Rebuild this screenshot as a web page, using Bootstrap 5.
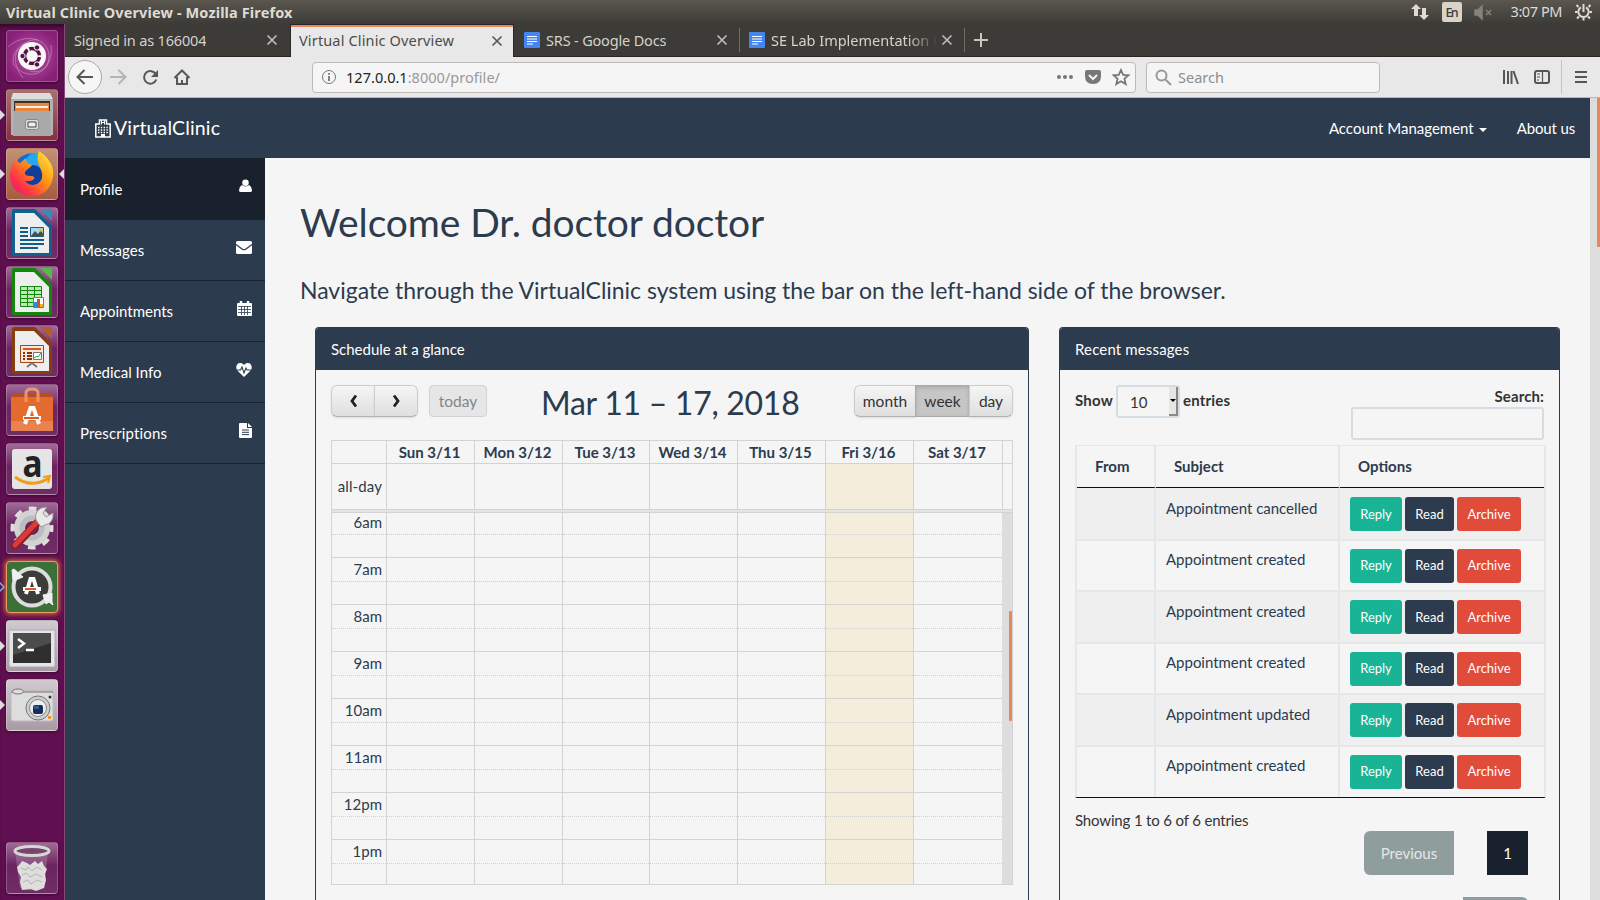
<!DOCTYPE html>
<html lang="en">
<head>
<meta charset="utf-8">
<title>Virtual Clinic Overview</title>
<link rel="stylesheet" href="https://cdn.jsdelivr.net/npm/bootstrap@5.3.0/dist/css/bootstrap.min.css">
<style>
:root{--navy:#2c3b4e;--ink:#19222c;--line:#d3d3d3;--soft:#e4e8e8}
body{width:1600px;height:900px;overflow:hidden;background:#f5f5f5;font:15px/21px Lato,sans-serif;color:var(--navy)}
svg{display:block;flex:none}
.chrome{font-family:"Noto Sans",sans-serif;font-size:14.5px;line-height:20px}
.panelbar{height:24px;background:linear-gradient(#5b574f,#3c3b37);color:#dfdbd2;padding-left:6px}
.panelbar b{letter-spacing:.13px;font-size:14.5px}
.dock{width:65px;height:876px;background:#600f50;border-right:1px solid #87487a;padding:6px 0 0 6px;box-shadow:inset 0 5px 5px -3px #2a0623}
.tile{width:52px;height:52px;margin-bottom:7px;border-radius:4px;border:1px solid #ffffff38;background:linear-gradient(#a06b98,#6c2460 45%,#702d65);position:relative;box-shadow:0 1px 3px #0006}
.tile svg{margin:-1px}
.tile.run::before{content:"";position:absolute;left:-7px;top:20px;border:5px solid transparent;border-left-color:#ddd;border-right:0}
.tile.focus::after{content:"";position:absolute;right:-7px;top:20px;border:5px solid transparent;border-right-color:#ddd;border-left:0}
.tile.pending::after{content:"";position:absolute;left:-7px;top:22px;border:3px solid transparent;border-left-color:#600f50;border-right:0}
.tile.pending::before{border-left-color:#79b7e8}
.tabsbar{height:33px;background:#3c3b37;color:#d5d2ca;border-bottom:1px solid #2b2427}
.btab{height:32px;padding:0 11px 0 9px}
.btab.on{height:33px;background:#e9e8e8;color:#4c4c4c;border:1px solid #2b2427;border-width:1px 1px 0;box-shadow:inset 0 2px #e9855b;padding:0 10px 0 8px}
.btab span{white-space:nowrap;overflow:hidden}
.toolbar{height:41px;background:#e9e8e8;border-bottom:1px solid #b9b6b3}
.field{height:31px;border:1px solid #bfbab5;border-radius:4px;background:#f5f5f5}
.topnav{height:60px;background:var(--navy);color:#fff;padding:0 15px 0 30px}
.side{width:200px;background:var(--navy);color:#fff}
.side a{height:61px;padding:1px 13px 0 15px;border-bottom:1px solid var(--ink);color:#fff;text-decoration:none}
.side svg{margin-top:-6px}
.side a.on{background:var(--ink);height:62px}
h1{font-size:39px;line-height:43px;margin:43px 0 0;font-weight:400;letter-spacing:-.11px}
h4.lede{font-size:23px;line-height:26px;margin:33px 0 0;font-weight:400;white-space:nowrap;letter-spacing:-.025px}
.box{border:1px solid var(--navy);border-radius:4px;height:573px;border-bottom:0;border-radius:4px 4px 0 0;overflow:hidden}
.box>header{height:42px;background:var(--navy);color:#fff;padding:11px 15px}
.fc{height:32px;border:1px solid #ccc;border-color:#ccc #ccc #b2b2b2;background:linear-gradient(#f5f5f5,#dfdfdf);color:#333;box-shadow:0 1px 2px #0000001a;display:flex;align-items:center;justify-content:center;font-size:15.5px}
.calgrid{display:grid;grid-template-columns:55px 88px 88px 87px 88px 88px 88px 89px 10px}
.cal{width:682px;border:1px solid var(--line);border-left:0}
.calgrid>div{border-left:1px solid var(--line)}
.calhead{height:22px;text-align:center;font-weight:700;line-height:23px}
.calhead>div{padding-right:2px}
.today{background:#f3edda}
.hour{height:47px;border-top:1px solid var(--line)}
.hour i{display:block;height:24px;border-bottom:1px dotted #cfcfcf;font-style:normal;text-align:right;padding-right:4px;line-height:23px}
.calview{height:371px;overflow:hidden}
.msgs{width:471px;border-collapse:separate;border-spacing:0;table-layout:fixed;border:2px solid var(--soft);border-width:1px 2px 0;border-bottom:1px solid #111;margin-top:5px}
.msgs td,.msgs th{border-right:2px solid var(--soft);vertical-align:top;padding:0}
.msgs td:last-child,.msgs th:last-child{border-right:0}
.msgs th{height:42px;padding:10px 18px 0;border-bottom:1px solid #111}
.msgs td{height:51.5px;border-bottom:2px solid var(--soft);padding:8px 10px 0}
.msgs tr:first-child td{height:52.5px;padding-top:9px}
.msgs tr:nth-child(odd) td{background:#efefef}
.msgs tr:last-child td{border-bottom:0;height:50.5px}
.subj{margin-top:.7px;letter-spacing:-.02px}
.mini{height:34px;border-radius:3px;color:#fff;font-size:13px;display:flex;align-items:center;justify-content:center;margin-right:3px}
.pg{height:44px;display:flex;align-items:center;justify-content:center;color:#e4e8e8;background:#8f9d9d}
</style>
</head>
<body>
<div class="chrome panelbar d-flex justify-content-between align-items-center"><b>Virtual Clinic Overview - Mozilla Firefox</b>
<svg width="190" height="24" viewBox="1410 0 190 24"><path d="M1416 4l5 5h-3v7h-4V9h-3zM1424 20l-5-5h3V8h4v7h3z" fill="#dfdbd2"/><rect x="1442" y="2" width="20" height="20" rx="2" fill="#d8d4c9"/><text x="1445.500" y="17" font-size="12.500" font-weight="500" fill="#3c3b37" textLength="13">En</text><path d="M1475 10h3l4-4v13l-4-4h-3zM1486 10l5 5m0-5l-5 5" fill="#84827b" stroke="#84827b" stroke-width="1.500"/><text x="1510.500" y="17" font-size="14.500" fill="#dfdbd2" textLength="52">3:07 PM</text><g fill="none" stroke="#dfdbd2" stroke-width="2"><path d="M1581 7.300a5.200 5.200 0 1 0 5 0"/><path d="M1583.500 4v8"/><path d="M1578.500 7l-2-2M1588.500 7l2-2M1577.500 12h-2.500M1589.500 12h2.500M1579 16.500l-2 2M1588 16.500l2 2M1583.500 18v2.500"/></g></svg></div>
<div class="d-flex">
<aside class="dock">
<div class="tile" style="background:radial-gradient(#b35aa3,#8a1f78 80%)"><svg width="52" height="52"><g fill="none" stroke="#d69bcd" stroke-opacity=".55"><path d="M2 17C18 2 43 8 43 26 43 45 20 51 8 35 3 22 20 8 32 10M17 48C5 32 8 19 20 13M24 41c14 4 23-9 21-26"/></g><circle cx="26" cy="26" r="14" fill="#f8f8f8"/><circle cx="26" cy="26" r="7.500" fill="none" stroke="#591047" stroke-width="3.500" stroke-dasharray="13.700 2" stroke-dashoffset="-1"/><g fill="#591047" stroke="#f8f8f8"><circle cx="16.500" cy="26" r="2.700"/><circle cx="31" cy="17.500" r="2.700"/><circle cx="31" cy="34.500" r="2.700"/></g></svg></div>
<div class="tile run" style="background:linear-gradient(#a9716e,#852f43)"><svg width="52" height="52"><path d="M7 4h37l3 8v34H5V12z" fill="#b2b2b2"/><path d="M7 4h37l3 6H5z" fill="#ddd"/><path d="M8 12h36v14H8z" fill="#3b302c"/><path d="M9 14h34v9H9z" fill="#e9853e"/><path d="M10 17h32v2H10z" fill="#fff0d7"/><path d="M8 22h36v1l1 24H7z" fill="#a9a9a9"/><rect x="19.500" y="30.500" width="13" height="10" rx="2" fill="#ddd" stroke="#888"/><path d="M22 33h8v5h-8z" fill="#eee" stroke="#444"/></svg></div>
<div class="tile run focus" style="background:linear-gradient(#c19276,#a85b40)"><svg width="52" height="52"><defs><linearGradient id="ff" x1="1" y1="0" x2="0" y2="1"><stop stop-color="#fff34b"/><stop offset=".4" stop-color="#ff9b12"/><stop offset=".75" stop-color="#ff3347"/><stop offset="1" stop-color="#dd1281"/></linearGradient></defs><circle cx="26" cy="25" r="19.500" fill="#0f6ed3"/><circle cx="30" cy="16" r="11" fill="#25a8ef"/><circle cx="27" cy="27" r="10" fill="#123d9a"/><path d="M33 3c9 6 16 15 14 26-2 12-10 19-21 19C13 48 4 40 4 28c0-8 3-14 7-18 0 3 1 4 3 5l6-5c0 4 1 6 6 7-2 3-5 4-7 7-1 3 2 4 6 4 3 0 4 2 3 3-3 3-7 2-9 2 5 7 15 4 17-3 2-9-8-15-3-27z" fill="url(#ff)"/></svg></div>
<div class="tile"><svg width="52" height="52"><path d="M6 4q0-2 2-2h21l17 17v28q0 2-3 2H8q-2 0-2-2z" fill="#11618f"/><path d="M9 6h19l15 15v25H9z" fill="#eee"/><path d="M34 2h12v12z" fill="#398abb"/><path d="M14 21h8m-8 4h8m-8 4h8m-8 4h24m-24 4h24m-24 4h18" stroke="#135c87" stroke-width="2"/><path d="M24.500 20.500h13v9h-13z" fill="#a9d6f2" stroke="#195982"/><path d="M25 29l4-5 3 3 3-4 3 6z" fill="#47513d"/><circle cx="35" cy="23" r="1.700" fill="#e9c22e"/></svg></div>
<div class="tile"><svg width="52" height="52"><path d="M6 4q0-2 2-2h21l17 17v28q0 2-3 2H8q-2 0-2-2z" fill="#14860d"/><path d="M9 6h19l15 15v25H9z" fill="#eee"/><path d="M34 2h12v12z" fill="#58ba46"/><path d="M14.500 20.500h21v20h-21zM14 24.500h22m-22 4h22m-22 4h22m-22 4h22M21.500 20v21m7-21v21" fill="#b9e9b4" stroke="#14860d"/><path d="M27.500 31.500h10v10h-10z" fill="#fff" stroke="#777"/><path d="M28 36h3v5h-3z" fill="#268ee0"/><path d="M31 33h3v8h-3z" fill="#cf5418"/><path d="M34 38h3v3h-3z" fill="#eeb51b"/></svg></div>
<div class="tile"><svg width="52" height="52"><path d="M6 4q0-2 2-2h21l17 17v28q0 2-3 2H8q-2 0-2-2z" fill="#873d10"/><path d="M9 6h19l15 15v25H9z" fill="#eee"/><path d="M34 2h12v12z" fill="#b45e2d"/><path d="M14.500 20.500h23v17h-23z" fill="#f7e7dc" stroke="#a34711"/><path d="M17 24h18" stroke="#d35a1b" stroke-width="2"/><path d="M17 28h2m2 0h5m-9 3h2m2 0h5m-9 3h2m2 0h5" stroke="#8b3308" stroke-width="2"/><path d="M27.500 27.500h8v7h-8z" fill="#fff" stroke="#777"/><path d="M28 33l3-2 1 1 3-4" stroke="#2aa437" fill="none"/><path d="M26 38l-5 4m5-4l5 4" stroke="#777" stroke-width="2"/></svg></div>
<div class="tile"><svg width="52" height="52"><path d="M5 13l3-3h36l3 3v34H5z" fill="#e36b2e"/><path d="M5 13l3-3h36l3 3z" fill="#b94d20"/><path d="M5 37h42v10H5z" fill="#e98150"/><path d="M20 18V9q0-4 6-4t6 4v9" fill="none" stroke="#ed9569" stroke-width="3"/><path d="M19 40l5.500-16h3L33 40M17 34h18" fill="none" stroke="#fff" stroke-width="4"/><path d="M18 34h15" stroke="#e8581c" stroke-width="2"/></svg></div>
<div class="tile"><svg width="52" height="52"><rect x="6" y="6" width="40" height="40" rx="3" fill="#e5e5e5"/><text x="16.500" y="34" font-family="Noto Sans" font-weight="700" font-size="38" fill="#222" textLength="20" lengthAdjust="spacingAndGlyphs">a</text><path d="M9 34q16 12 34 1" fill="none" stroke="#f49b17" stroke-width="3"/><path d="M42 40l2-7-7 1" fill="none" stroke="#f49b17" stroke-width="2"/></svg></div>
<div class="tile"><svg width="52" height="52"><circle cx="26" cy="26" r="18.500" fill="none" stroke="#dedede" stroke-width="6" stroke-dasharray="7.300 7.230" stroke-dashoffset="3.600"/><circle cx="26" cy="26" r="12.500" fill="none" stroke="#d3d3d3" stroke-width="11"/><circle cx="26" cy="26" r="10" fill="none" stroke="#bdbdbd" stroke-width="5"/><path d="M9 44l24-25" stroke="#842227" stroke-width="8" stroke-linecap="round"/><path d="M9 43l23-24" stroke="#dd393b" stroke-width="5" stroke-linecap="round"/><path d="M30 18q-2-8 5-12l6-1-4 6 3 4 7-4q1 10-8 12l-4 2z" fill="#e9e9e9" stroke="#999"/></svg></div>
<div class="tile run pending" style="background:#3b7038;border-color:#ef9a5d;box-shadow:0 0 5px 1px #e4793e"><svg width="52" height="52"><circle cx="26" cy="26" r="18.500" fill="#3c3c3b" stroke="#ddd" stroke-width="4"/><path d="M6 9l2-1 9 8-10 4zM37 34l9-2v9l1 3-4-3-3 2z" fill="#eee" stroke="#eee"/><path d="M20 33l4.500-15h3L32 33M17 28h18" fill="none" stroke="#fff" stroke-width="4"/><path d="M19 28h11" stroke="#e85818" stroke-width="2"/></svg></div>
<div class="tile run" style="background:linear-gradient(#d1c9d0,#a99ba6)"><svg width="52" height="52"><rect x="3" y="10" width="46" height="37" rx="1" fill="#e5e5e5" stroke="#aaa"/><path d="M7 13h38v30H7z" fill="#2f2f2f"/><path d="M7 13h38v10L7 35z" fill="#4c4c4c"/><path d="M12 19l6 4.500-6 4.500M20 30h8" fill="none" stroke="#fff" stroke-width="2.500"/></svg></div>
<div class="tile run" style="background:linear-gradient(#d1c9d0,#a99ba6)"><svg width="52" height="52"><rect x="5" y="12" width="42" height="30" rx="2" fill="#ddd" stroke="#bbb"/><path d="M5 13h42" stroke="#777"/><ellipse cx="12" cy="12.500" rx="5.500" ry="2.500" fill="#ddd" stroke="#777"/><circle cx="32" cy="29" r="12" fill="#cecece" stroke="#777"/><circle cx="32" cy="29" r="8.500" fill="#eee" stroke="#888"/><rect x="27" y="26" width="10" height="9" rx="2" fill="#182c56"/><path d="M28 27h5v3h-5z" fill="#2c5e9d"/><path d="M42 37h3v3h-3z" fill="#e59a22"/><circle cx="44" cy="18" r="1.500" fill="#333"/></svg></div>
<div class="tile" style="margin-top:111px"><svg width="52" height="52"><path d="M9 10l5 36q12 5 24 0l4-36z" fill="#b99bb7" fill-opacity=".35"/><path d="M11 25l3-3 2-3 5 2 3 2 5-4 3 3 4-3 2 5 3 3-2 5 1 6-2 8-8 3-5-2-9 1-2-8 1-5-3-5z" fill="#dededc"/><path d="M15 26l5 2 2-3 4 4 5-4 5 3M16 33l4-2 4 4 6-3 6 3M17 40l5-2 3 4 6-4 5 2" fill="none" stroke="#b4b4b2"/><ellipse cx="26" cy="9" rx="17" ry="4.500" fill="#77466f" stroke="#d5d8d3" stroke-width="3"/></svg></div>
</aside>
<div class="flex-grow-1">
<div class="chrome tabsbar d-flex">
<div class="btab d-flex align-items-center justify-content-between" style="width:225px;padding-right:12px"><span style="letter-spacing:-.17px">Signed in as 166004</span><svg width="12" height="12" viewBox="0 0 12 12"><path d="M1.500 1.500l9 9m0-9l-9 9" stroke="#c2bfb9" stroke-width="1.600"/></svg></div>
<div class="btab on d-flex align-items-center justify-content-between" style="width:224px"><span style="letter-spacing:.15px;margin-top:-2px">Virtual Clinic Overview</span><svg width="12" height="12" viewBox="0 0 12 12"><path d="M1.500 1.500l9 9m0-9l-9 9" stroke="#555" stroke-width="1.600"/></svg></div>
<div class="btab d-flex align-items-center" style="width:225px;padding-left:10px"><svg width="16" height="16" viewBox="0 0 16 16" class="me-1"><rect width="16" height="16" rx="1" fill="#4485f0"/><path d="M3 4.500h10M3 7h10M3 9.500h10M3 12h6" stroke="#fff" stroke-width="1.200"/></svg><span style="margin-left:2px;letter-spacing:-.17px">SRS - Google Docs</span><svg class="ms-auto" width="12" height="12" viewBox="0 0 12 12"><path d="M1.500 1.500l9 9m0-9l-9 9" stroke="#c2bfb9" stroke-width="1.600"/></svg></div>
<div class="btab d-flex align-items-center my-1" style="width:226px;height:24px;border:1px solid #706d67;border-width:0 1px;padding-left:9px"><svg width="16" height="16" viewBox="0 0 16 16" class="me-1"><rect width="16" height="16" rx="1" fill="#4485f0"/><path d="M3 4.500h10M3 7h10M3 9.500h10M3 12h6" stroke="#fff" stroke-width="1.200"/></svg><span style="margin-left:2px;width:166px;-webkit-mask:linear-gradient(90deg,#000 82%,#0003 97%,transparent)">SE Lab Implementation P</span><svg class="ms-auto" width="12" height="12" viewBox="0 0 12 12"><path d="M1.500 1.500l9 9m0-9l-9 9" stroke="#c2bfb9" stroke-width="1.600"/></svg></div>
<svg width="34" height="32"><path d="M16 9v14M9 16h14" stroke="#c9c6bf" stroke-width="2"/></svg>
</div>
<div class="chrome toolbar d-flex align-items-center">
<svg width="247" height="40" viewBox="65 57 247 40" fill="none" stroke="#575757" stroke-width="2"><circle cx="85" cy="77" r="16.500" fill="#f6f6f6" stroke="#aaa" stroke-width="1"/><path d="M93 77H78m6.500-7l-7 7 7 7"/><path d="M110 77h15m-6.500-7l7 7-7 7" stroke="#b4b4b4"/><path d="M156 74.500a6.300 6.300 0 1 0 .3 5"/><path d="M158 70v7h-7z" fill="#575757" stroke="none"/><path d="M174.500 78l7.500-7.500 7.500 7.500M177 77v7h10v-7M182 84v-4" /></svg>
<div class="field d-flex align-items-center" style="width:824px;padding-left:8px"><svg width="16" height="16" viewBox="0 0 16 16" fill="none" stroke="#777"><circle cx="8" cy="8" r="6.500"/><path d="M8 7v5M8 4v1.800" stroke-width="1.800"/></svg><span style="margin-left:9px;color:#222;letter-spacing:.03px">127.0.0.1<span style="color:#999">:8000/profile/</span></span>
<svg class="ms-auto" width="90" height="30" viewBox="1045 62 90 30"><g fill="#777"><circle cx="1059" cy="77" r="2"/><circle cx="1065" cy="77" r="2"/><circle cx="1071" cy="77" r="2"/><path d="M1087 70h12q2 0 2 2v4q0 8-8 8t-8-8v-4q0-2 2-2z"/></g><path d="M1089 75l4 4 4-4" stroke="#f5f5f5" stroke-width="2" fill="none"/><path d="M1121 70l2.200 4.800 5.200.5-4 3.500 1.300 5.200-4.700-2.800-4.700 2.800 1.300-5.200-4-3.500 5.200-.5z" fill="none" stroke="#777" stroke-width="1.800"/></svg></div>
<div class="field d-flex align-items-center" style="width:234px;margin-left:10px;padding-left:8px"><svg width="17" height="17" viewBox="0 0 17 17" fill="none" stroke="#999" stroke-width="2"><circle cx="6.500" cy="6.500" r="5"/><path d="M10 10l6 6"/></svg><span style="margin-left:6px;color:#8d8d8d">Search</span></div>
<svg width="220" height="40" viewBox="1380 57 220 40" fill="none" stroke="#555" stroke-width="2"><path d="M1504 70v14m4-13v13m3.500-13v13m2-13l4.500 13"/><rect x="1535" y="71" width="14" height="12" rx="2"/><path d="M1542.500 71v12M1537 74h3m-3 3h3m-3 3h2" stroke-width="1.200"/><path d="M1561.500 60v34" stroke="#c5c5c5" stroke-width="1"/><path d="M1575 72h12m-12 5h12m-12 5h12"/></svg>
</div>
<div class="d-flex" style="height:802px;overflow:hidden">
<div style="width:1525px">
<nav class="topnav d-flex align-items-center"><svg width="16" height="19" viewBox="0 0 16 19"><path d="M.8 18V5h3.700V1h7v4h3.700v13z" fill="none" stroke="#fff" stroke-width="1.500"/><path d="M6.500 1.500v4m3-4v4m-3-2h3" stroke="#fff"/><path d="M3 8.500h10M3 11h10M3 13.500h10" stroke="#fff" stroke-width="1.300" stroke-dasharray="1.400 1.400"/><path d="M6 18v-3h4v3" fill="#fff"/></svg><span style="font-size:19.500px;letter-spacing:.15px;margin:-2px 0 0 3px">VirtualClinic</span><span class="ms-auto">Account Management</span><i style="border:4px solid transparent;border-top-color:#fff;border-bottom:0;margin:4px 30px 0 5px"></i><span style="letter-spacing:-.15px">About us</span></nav>
<div class="d-flex" style="height:742px">
<div class="side">
<a class="on d-flex align-items-center justify-content-between">Profile<svg width="13" height="14" viewBox="0 0 14 14" fill="#fff"><circle cx="7" cy="3.500" r="3.500"/><path d="M3 6q4 3 8 0 3 2 3 5.500 0 2-2 2H2q-2 0-2-2Q0 8 3 6z"/></svg></a>
<a class="d-flex align-items-center justify-content-between">Messages<svg width="16" height="13" viewBox="0 0 16 13"><rect width="16" height="13" rx="1.500" fill="#fff"/><path d="M0 3.500l6 4.500q2 1.500 4 0l6-4.500" fill="none" stroke="#2c3b4e" stroke-width="1.200"/></svg></a>
<a class="d-flex align-items-center justify-content-between">Appointments<svg width="15" height="15" viewBox="0 0 15 15"><rect y="2" width="15" height="13" rx="1" fill="#fff"/><path d="M4 0v4m7-4v4" stroke="#fff" stroke-width="2.500"/><path d="M1 5.500h13M1 8.500h13M1 11.500h13M4.500 5v9m3-9v9m3-9v9" stroke="#2c3b4e" stroke-width=".8"/></svg></a>
<a class="d-flex align-items-center justify-content-between">Medical Info<svg width="16" height="14" viewBox="0 0 16 14"><path d="M8 14L1.300 7.500C-2 3 3-3 8 2c5-5 10 1 6.700 5.500z" fill="#fff"/><path d="M0 7h4.500L6 4l2 6 2-5 1 2h5" fill="none" stroke="#2c3b4e" stroke-width="1.100"/></svg></a>
<a class="d-flex align-items-center justify-content-between"><span style="letter-spacing:.13px">Prescriptions</span><svg width="13" height="15" viewBox="0 0 13 15"><path d="M1 0h7v5h5v9q0 1-1 1H1q-1 0-1-1V1q0-1 1-1zM9 0l4 4H9z" fill="#fff"/><path d="M3 7h7M3 9.300h7M3 11.600h7" stroke="#2c3b4e"/></svg></a>
</div>
<main style="width:1325px;padding-left:35px">
<h1>Welcome Dr. doctor doctor</h1>
<h4 class="lede">Navigate through the VirtualClinic system using the bar on the left-hand side of the browser.</h4>
<div class="d-flex" style="padding:24px 0 0 15px;gap:30px">
<section class="box" style="width:714px"><header>Schedule at a glance</header>
<div style="padding:15px 15px 0">
<div class="d-flex" style="height:55px"><div class="fc rounded-start" style="width:44px"><svg width="9" height="12" viewBox="0 0 9 12"><path d="M7 .5L3 6l4 5.500" fill="none" stroke="#222" stroke-width="2.800"/></svg></div><div class="fc rounded-end" style="width:44px;margin-left:-1px"><svg width="9" height="12" viewBox="0 0 9 12"><path d="M2 .5L6 6l-4 5.500" fill="none" stroke="#222" stroke-width="2.800"/></svg></div><div class="fc rounded-1" style="width:58px;margin-left:11px;background:#e6e6e6;color:#858585;border-color:#d2d2d2;box-shadow:none">today</div>
<div style="font-size:32px;line-height:35px;margin-left:54px;width:313px;letter-spacing:-.28px">Mar 11 – 17, 2018</div>
<div class="fc rounded-start" style="width:62px">month</div><div class="fc" style="width:55px;margin-left:-1px;background:#c6c6c6;border-color:#aaa;box-shadow:inset 0 2px 4px #0002">week</div><div class="fc rounded-end" style="width:44px;margin-left:-1px">day</div></div>
<div class="cal">
<div class="calgrid calhead"><div></div><div>Sun 3/11</div><div>Mon 3/12</div><div>Tue 3/13</div><div>Wed 3/14</div><div>Thu 3/15</div><div>Fri 3/16</div><div>Sat 3/17</div><div></div></div>
<div class="calgrid" style="height:46px;border-top:1px solid var(--line)"><div class="text-end" style="padding:12px 4px 0 0;letter-spacing:.12px">all-day</div><div></div><div></div><div></div><div></div><div></div><div class="today"></div><div></div><div></div></div>
<div style="height:4px;border:1px solid var(--line);border-right:0;background:#e4e4e4"></div>
<div class="d-flex calview"><div id="hours" style="width:671px;margin-top:-3px"></div><div style="width:10px;background:#ddd;padding:98px 0 0 7px"><div style="height:110px;background:#e6875f;border-radius:1px"></div></div></div>
</div></div></section>
<section class="box" style="width:501px"><header style="letter-spacing:.15px">Recent messages</header>
<div style="padding:15px 13px 0 15px">
<div class="d-flex fw-bold" style="height:55px;color:#333"><span style="margin-top:5px;width:41px;letter-spacing:.2px">Show</span><div class="d-flex fw-normal" style="width:64px;height:33px;border:2px solid #d4dde4;border-radius:3px;padding-left:12px;line-height:30px"><span>10</span><div class="ms-auto d-flex align-items-center justify-content-center" style="width:9px;background:#e8e6e3;border:1px solid #888;border-width:0 2px 2px 0"><i style="border:3px solid transparent;border-top-color:#000;border-bottom:0"></i></div></div><span style="margin:5px 0 0 3px;letter-spacing:.2px">entries</span>
<div class="ms-auto text-end" style="width:193px;margin-right:2px"><div style="height:22px;line-height:22px;letter-spacing:.1px">Search:</div><div style="height:33px;border:2px solid #d4dde4;border-radius:3px"></div></div></div>
<table class="msgs"><colgroup><col style="width:79px"><col style="width:184px"><col></colgroup><thead><tr><th>From</th><th>Subject</th><th>Options</th></tr></thead><tbody id="rows"></tbody></table>
<div style="padding-top:12px;height:33px;color:#333;letter-spacing:-.16px">Showing 1 to 6 of 6 entries</div>
<div class="d-flex justify-content-end" style="padding-right:18px"><div class="pg rounded-start" style="width:90px">Previous</div><div class="pg" style="width:41px;margin-left:33px;background:var(--ink);color:#fff">1</div></div>
<div class="d-flex justify-content-end" style="padding:22px 18px 0 0"><div class="pg rounded-end" style="width:65px">Next</div></div>
</div></section>
</div></main></div></div>
<div style="width:10px;background:#ddd;padding-left:7px"><div style="height:149px;background:#e6875f"></div></div>
</div></div></div>
<script>
document.getElementById('hours').innerHTML=['6am','7am','8am','9am','10am','11am','12pm','1pm'].map(h=>
 `<div class="calgrid hour" style="grid-template-columns:55px 88px 88px 87px 88px 88px 88px 89px"><div><i>${h}</i></div>`+[0,1,2,3,4,5,6].map(d=>`<div class="${d==5?'today':''}"><i></i></div>`).join('')+'</div>').join('');
document.getElementById('rows').innerHTML=['cancelled','created','created','created','updated','created'].map(s=>
 `<tr><td></td><td><div class="subj">Appointment ${s}</div></td><td><div class="d-flex"><div class="mini" style="width:52px;background:#18b495">Reply</div><div class="mini" style="width:49px;background:#2c3b4e">Read</div><div class="mini" style="width:64px;background:#e04b3a">Archive</div></div></td></tr>`).join('');
</script>
<script src="https://cdn.jsdelivr.net/npm/bootstrap@5.3.0/dist/js/bootstrap.bundle.min.js"></script>
</body>
</html>
